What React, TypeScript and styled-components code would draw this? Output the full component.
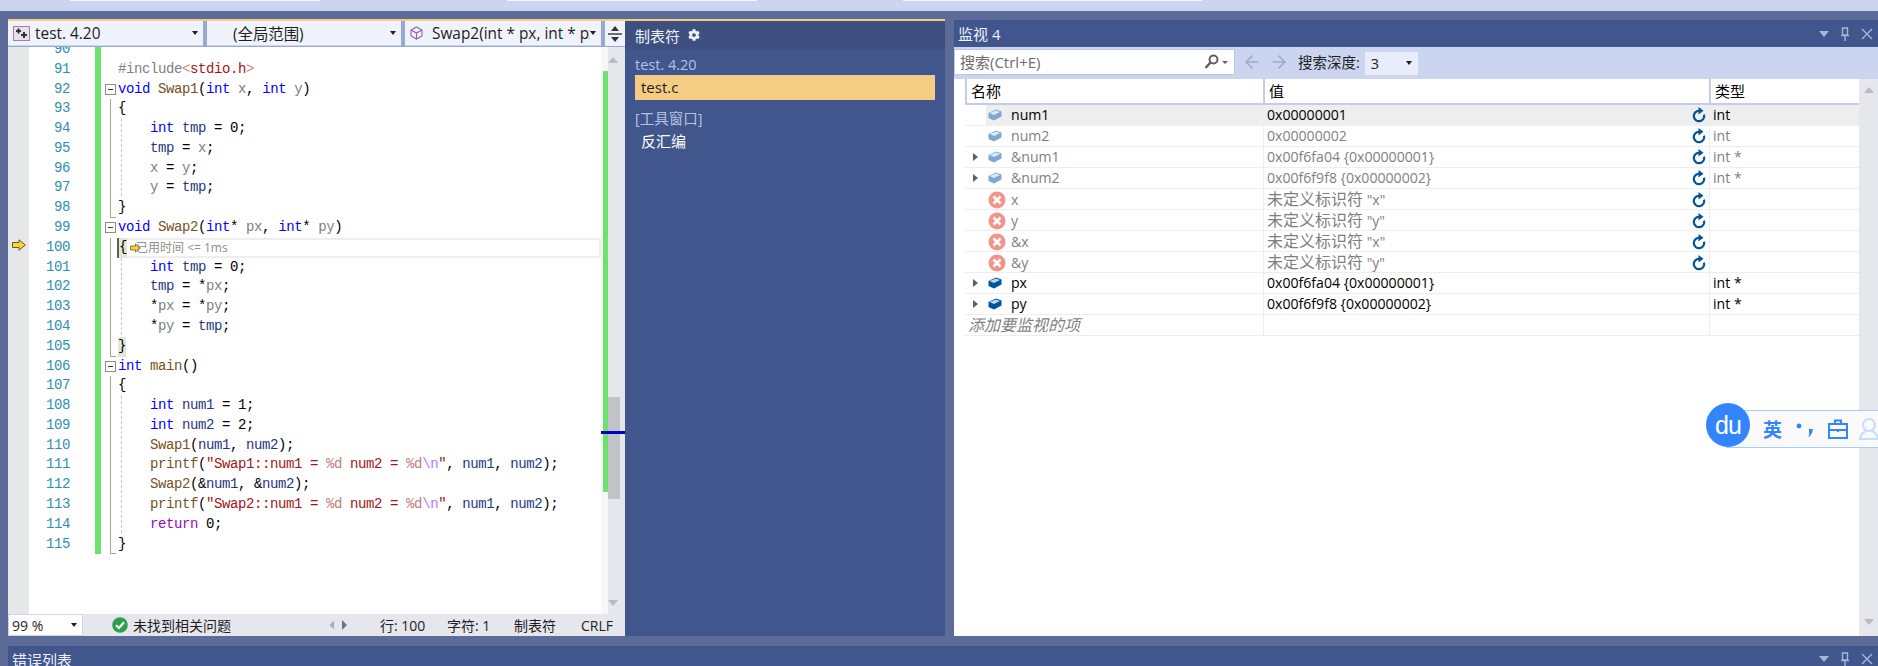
import React from 'react'
import styled, { createGlobalStyle } from 'styled-components'
import { FaCog } from 'react-icons/fa'
import { ArrowLeft, ArrowRight } from 'lucide-react'

const UI_FONT = `'Open Sans', 'Noto Sans CJK SC', sans-serif`
const CODE_FONT = `'Liberation Mono', 'Noto Sans CJK SC', monospace`

const GlobalStyle = createGlobalStyle`
  html, body {
    margin: 0;
    padding: 0;
    width: 1878px;
    height: 666px;
    overflow: hidden;
    background: #ccd5f0;
  }
`

const Page = styled.div`
  position: relative;
  display: flex;
  flex-direction: column;
  width: 1878px;
  height: 666px;
  overflow: hidden;
  background: #5d6b99;
  font-family: ${UI_FONT};
  font-size: 13px;
`

const TopBand = styled.div`
  display: flex;
  flex: none;
  height: 11px;
  margin-bottom: 8px;
  background: #ccd5f0;
`

const Slip = styled.div<{ $left: number; $width: number }>`
  height: 1px;
  width: ${(p) => p.$width}px;
  margin-left: ${(p) => p.$left}px;
  background: #f4f6fd;
`

const Workspace = styled.div`
  display: flex;
  flex: none;
  height: 617px;
  padding-left: 8px;
`

const EditorPane = styled.div`
  display: flex;
  flex-direction: column;
  flex: none;
  width: 617px;
  border-top: 2px solid #f5cc84;
`

const NavBar = styled.div`
  display: flex;
  flex: none;
  height: 26px;
  box-sizing: border-box;
  border-bottom: 1px solid #98a9d1;
  background: #98a9d1;
`

const Combo = styled.div<{ $width: number; $pad: number }>`
  display: flex;
  align-items: center;
  flex: none;
  width: ${(p) => p.$width}px;
  margin-right: 4px;
  padding-left: ${(p) => p.$pad}px;
  padding-right: 5px;
  box-sizing: border-box;
  overflow: hidden;
  border-bottom: 1px solid #ccd5f0;
  background: #f0f3fc;
  color: #1e1e1e;
  font-size: 15.4px;
  white-space: nowrap;

  svg {
    flex: none;
  }
`

const ComboText = styled.span`
  flex: 1;
  overflow: hidden;
`

const ComboIcon = styled.svg`
  margin-right: 5px;
`

const Caret = styled.i<{ $color?: string }>`
  flex: none;
  width: 0;
  height: 0;
  border-left: 3.5px solid transparent;
  border-right: 3.5px solid transparent;
  border-top: 4px solid ${(p) => p.$color || '#1e1e1e'};
`

const SplitButton = styled.div`
  display: flex;
  align-items: center;
  justify-content: center;
  flex: 1;
  background: #f0f3fc;
`

const EditorBody = styled.div`
  display: flex;
  flex: 1;
  min-height: 0;
  background: #fff;
`

const CodeArea = styled.div`
  position: relative;
  flex: 1;
  min-width: 0;
  overflow: hidden;
  padding-left: 21px;
  background: linear-gradient(#e6e7e8, #e6e7e8) 0 0 / 21px 100% no-repeat;
`

const Lines = styled.div`
  margin-top: -7px;
`

const Line = styled.div`
  display: flex;
  height: 19.79px;
  font-family: ${CODE_FONT};
  font-size: 14px;
  letter-spacing: -0.4px;
  line-height: 19.79px;
  white-space: pre;
`

const LineNo = styled.div`
  flex: none;
  width: 41px;
  text-align: right;
  color: #2b91af;
`

const Green = styled.div`
  flex: none;
  width: 6px;
  margin-left: 25px;
  background: #6ee26c;
`

const Fold = styled.div<{ $kind?: 'open' | 'mid' | 'end' }>`
  display: flex;
  align-items: center;
  flex: none;
  width: 17px;
  padding-left: 4px;
  box-sizing: border-box;
  background:
    ${(p) =>
      p.$kind === 'mid'
        ? 'linear-gradient(#a2a2a2, #a2a2a2) 9px 0 / 1px 100% no-repeat'
        : p.$kind === 'end'
          ? 'linear-gradient(#a2a2a2, #a2a2a2) 9px 0 / 1px 100% no-repeat, linear-gradient(#a2a2a2, #a2a2a2) 9px 100% / 6px 1px no-repeat'
          : 'none'};
`

const FoldBox = styled.div`
  display: flex;
  align-items: center;
  justify-content: center;
  width: 9px;
  height: 9px;
  border: 1px solid #8c8c8c;
  background: #fff;

  &::after {
    content: '';
    width: 5px;
    height: 1px;
    background: #333;
  }
`

const Code = styled.div<{ $guide?: boolean; $current?: boolean }>`
  display: flex;
  align-items: center;
  flex: 1;
  min-width: 0;
  color: #000;
  ${(p) =>
    p.$guide &&
    `background: repeating-linear-gradient(#c8c8c8 0 3px, transparent 3px 5px) 3px 0 / 1px 100% no-repeat;`}
  ${(p) =>
    p.$current &&
    `box-shadow: inset 0 0 0 2px #eeeef2; border-left: 2px solid #5f5f5f; margin-left: -1px;`}
`

const TOKEN_COLORS: Record<string, string> = {
  t: '#000000',
  k: '#0000ff',
  f: '#74531f',
  p: '#808080',
  v: '#1f377f',
  s: '#a31515',
  e: '#c57b7b',
  n: '#b776fb',
  r: '#8f08c4',
  m: '#808080',
  a: '#e08080',
}

const Token = styled.span<{ $type: string }>`
  color: ${(p) => TOKEN_COLORS[p.$type]};
`

const Brace = styled.span`
  background: #e2e6d6;
`

const Hint = styled.span`
  display: flex;
  align-items: center;
  margin-left: 3px;
  color: #8e8e8e;
  font-family: ${UI_FONT};
  font-size: 12px;
  letter-spacing: 0;
`

const HintArrow = styled.svg`
  flex: none;
  margin-right: -5px;
`

const MarginArrow = styled.svg`
  position: absolute;
  left: 4px;
  top: 192px;
`

const EditorScroll = styled.div`
  position: relative;
  flex: none;
  width: 24px;
  background: linear-gradient(#e6e7ed, #e6e7ed) 7px 0 / 17px 100% no-repeat #f7f7f9;
`

const ScrollArrow = styled.i<{ $down?: boolean; $top: number; $left: number }>`
  position: absolute;
  left: ${(p) => p.$left}px;
  top: ${(p) => p.$top}px;
  width: 0;
  height: 0;
  border-left: 5px solid transparent;
  border-right: 5px solid transparent;
  ${(p) =>
    p.$down ? 'border-top: 6px solid #b8bac4;' : 'border-bottom: 6px solid #b8bac4;'}
`

const ScrollMark = styled.div<{ $top: number; $left: number; $w: number; $h: number; $c: string }>`
  position: absolute;
  top: ${(p) => p.$top}px;
  left: ${(p) => p.$left}px;
  width: ${(p) => p.$w}px;
  height: ${(p) => p.$h}px;
  background: ${(p) => p.$c};
`

const StatusBar = styled.div`
  display: flex;
  align-items: center;
  flex: none;
  height: 22px;
  background: #e6e7ed;
  color: #1e1e1e;
  font-size: 14px;
`

const ZoomBox = styled.div`
  display: flex;
  align-items: center;
  justify-content: space-between;
  flex: none;
  width: 75px;
  height: 22px;
  margin-right: 29px;
  padding: 0 5px 0 3px;
  box-sizing: border-box;
  border: 1px solid #ccd5f0;
  background: #fff;
`

const StatusItem = styled.div<{ $w: number }>`
  display: flex;
  align-items: center;
  flex: none;
  gap: 5px;
  width: ${(p) => p.$w}px;
  white-space: nowrap;
`

const TabsPane = styled.div`
  display: flex;
  flex-direction: column;
  flex: none;
  width: 320px;
  margin-right: 9px;
  border-top: 2px solid #f5cc84;
  background: #40568d;
  color: #fff;
`

const TabsHeader = styled.div`
  display: flex;
  align-items: center;
  flex: none;
  gap: 8px;
  height: 28px;
  padding-left: 10px;
  background: #3e5080;
  font-size: 15px;
  color: #eef1fa;
`

const GroupLabel = styled.div<{ $top: number }>`
  margin: ${(p) => p.$top}px 0 0 10px;
  height: 18px;
  line-height: 18px;
  color: #b6c2e2;
  font-size: 14.5px;
`

const FileItem = styled.div<{ $active?: boolean }>`
  height: 25px;
  margin: 1px 10px 0 10px;
  padding-left: 6px;
  line-height: 25px;
  font-size: 15px;
  color: ${(p) => (p.$active ? '#1e1e1e' : '#fff')};
  background: ${(p) => (p.$active ? '#f5cc84' : 'transparent')};
`

const WatchPane = styled.div`
  display: flex;
  flex-direction: column;
  flex: 1;
  min-width: 0;
  margin-top: 1px;
  background: #fff;
`

const TitleBar = styled.div<{ $height: number }>`
  display: flex;
  align-items: center;
  justify-content: space-between;
  flex: none;
  height: ${(p) => p.$height}px;
  padding-left: 4px;
  background: #40568d;
  color: #eef1fa;
  font-size: 15px;
`

const TitleButtons = styled.div`
  display: flex;
  align-items: center;
  gap: 11px;
  padding-right: 5px;
  color: #a9b6d8;
`

const ToolBar = styled.div`
  display: flex;
  align-items: center;
  flex: none;
  height: 32px;
  padding-bottom: 3px;
  box-sizing: border-box;
  background: #ccd5f0;
  color: #1e1e1e;
`

const SearchBox = styled.div`
  display: flex;
  align-items: center;
  flex: none;
  width: 281px;
  height: 26px;
  margin-right: 7px;
  padding: 0 6px 0 5px;
  box-sizing: border-box;
  border: 1px solid #bcc7e6;
  background: #fff;
  color: #6d6d6d;
  font-size: 15px;
`

const SearchText = styled.span`
  flex: 1;
`

const DepthLabel = styled.span`
  margin: 0 5px 0 9px;
  font-size: 14.5px;
`

const DepthCombo = styled.div`
  display: flex;
  align-items: center;
  justify-content: space-between;
  width: 53px;
  height: 23px;
  margin-top: 3px;
  padding: 0 6px 0 6px;
  box-sizing: border-box;
  background: #e9edf9;
  font-size: 14.5px;
`

const WatchBody = styled.div`
  display: flex;
  flex: 1;
  min-height: 0;
`

const Table = styled.div`
  flex: 1;
  min-width: 0;
  padding-left: 11px;
`

const HeadRow = styled.div`
  display: grid;
  grid-template-columns: 298px 446px 1fr;
  height: 24px;
  border-bottom: 2px solid #c3cde9;
  box-sizing: content-box;
  line-height: 24px;
  color: #000;
  font-size: 15px;
`

const HeadCell = styled.div`
  padding-left: 4px;
  border-left: 2px solid #c3cde9;
`

const Row = styled.div`
  display: grid;
  grid-template-columns: 21px 277px 446px 1fr;
  height: 20px;
  border-bottom: 1px solid #eeeef2;
`

const Expander = styled.div`
  display: flex;
  align-items: center;
  padding-left: 8px;
`

const ExpandArrow = styled.i`
  width: 0;
  height: 0;
  border-top: 4px solid transparent;
  border-bottom: 4px solid transparent;
  border-left: 5px solid #5f5f5f;
`

const Cell = styled.div<{ $dim?: boolean; $selected?: boolean; $line?: boolean }>`
  display: flex;
  align-items: center;
  min-width: 0;
  padding-left: ${(p) => (p.$line ? 3 : 2)}px;
  padding-right: 3px;
  ${(p) => p.$line && 'border-left: 1px solid #eeeef2;'}
  background: ${(p) => (p.$selected ? '#eeeeee' : 'transparent')};
  color: ${(p) => (p.$dim ? '#7f7f7f' : '#000')};
  font-size: 14.1px;
  line-height: 20px;
  white-space: nowrap;
`

const CellText = styled.span`
  flex: 1;
`

const Cjk = styled.span`
  font-size: 16px;
`

const NameIcon = styled.span`
  display: flex;
  align-items: center;
  flex: none;
  width: 23px;
`

const AddRow = styled.div`
  display: grid;
  grid-template-columns: 298px 446px 1fr;
  height: 20px;
  border-bottom: 1px solid #eeeef2;
  color: #7f7f7f;
  font-size: 16px;
  font-style: italic;
  line-height: 20px;
`

const AddCell = styled.div`
  padding-left: 3px;
`

const AddEmpty = styled.div`
  border-left: 1px solid #eeeef2;
`

const WatchScroll = styled.div`
  position: relative;
  flex: none;
  width: 19px;
  background: #e6e7ed;
`

const BottomPane = styled.div`
  margin: 10px 0 0 8px;
`

const ImeBar = styled.div`
  position: absolute;
  left: 1726px;
  top: 410px;
  display: flex;
  align-items: center;
  width: 160px;
  height: 38px;
  padding-left: 36px;
  box-sizing: border-box;
  border: 1px solid #a9cbff;
  background: #fafafa;
  color: #3385ff;
`

const ImeLogo = styled.div`
  position: absolute;
  left: 1706px;
  top: 403px;
  display: flex;
  align-items: center;
  justify-content: center;
  width: 44px;
  height: 44px;
  border-radius: 50%;
  background: #3385ff;
  color: #fff;
  font-family: 'Liberation Sans', sans-serif;
  font-size: 25px;
  letter-spacing: -1px;
`

const ImeWord = styled.span`
  flex: none;
  width: 33px;
  font-size: 19px;
  font-weight: 700;
`

const ImePunct = styled.svg`
  flex: none;
  margin-right: 14px;
`

const ImeIcon = styled.svg`
  flex: none;
  margin-right: 11px;
`

type Tok = [string, string]
interface LineData {
  n: number
  fold?: 'open' | 'mid' | 'end'
  guide?: boolean
  code: Tok[]
}

const printfLine = (name: string): Tok[] => [
  ['t', '    '],
  ['f', 'printf'],
  ['t', '('],
  ['s', `"${name}::num1 = `],
  ['e', '%d'],
  ['s', ' num2 = '],
  ['e', '%d'],
  ['n', '\\n'],
  ['s', '"'],
  ['t', ', '],
  ['v', 'num1'],
  ['t', ', '],
  ['v', 'num2'],
  ['t', ');'],
]

const LINES: LineData[] = [
  { n: 90, code: [] },
  { n: 91, code: [['m', '#include'], ['a', '<'], ['s', 'stdio.h'], ['a', '>']] },
  {
    n: 92,
    fold: 'open',
    code: [['k', 'void'], ['t', ' '], ['f', 'Swap1'], ['t', '('], ['k', 'int'], ['t', ' '], ['p', 'x'], ['t', ', '], ['k', 'int'], ['t', ' '], ['p', 'y'], ['t', ')']],
  },
  { n: 93, fold: 'mid', code: [['t', '{']] },
  { n: 94, fold: 'mid', guide: true, code: [['t', '    '], ['k', 'int'], ['t', ' '], ['v', 'tmp'], ['t', ' = 0;']] },
  { n: 95, fold: 'mid', guide: true, code: [['t', '    '], ['v', 'tmp'], ['t', ' = '], ['p', 'x'], ['t', ';']] },
  { n: 96, fold: 'mid', guide: true, code: [['t', '    '], ['p', 'x'], ['t', ' = '], ['p', 'y'], ['t', ';']] },
  { n: 97, fold: 'mid', guide: true, code: [['t', '    '], ['p', 'y'], ['t', ' = '], ['v', 'tmp'], ['t', ';']] },
  { n: 98, fold: 'end', code: [['t', '}']] },
  {
    n: 99,
    fold: 'open',
    code: [['k', 'void'], ['t', ' '], ['f', 'Swap2'], ['t', '('], ['k', 'int'], ['t', '* '], ['p', 'px'], ['t', ', '], ['k', 'int'], ['t', '* '], ['p', 'py'], ['t', ')']],
  },
  { n: 100, fold: 'mid', code: [] },
  { n: 101, fold: 'mid', guide: true, code: [['t', '    '], ['k', 'int'], ['t', ' '], ['v', 'tmp'], ['t', ' = 0;']] },
  { n: 102, fold: 'mid', guide: true, code: [['t', '    '], ['v', 'tmp'], ['t', ' = *'], ['p', 'px'], ['t', ';']] },
  { n: 103, fold: 'mid', guide: true, code: [['t', '    *'], ['p', 'px'], ['t', ' = *'], ['p', 'py'], ['t', ';']] },
  { n: 104, fold: 'mid', guide: true, code: [['t', '    *'], ['p', 'py'], ['t', ' = '], ['v', 'tmp'], ['t', ';']] },
  { n: 105, fold: 'end', code: [] },
  { n: 106, fold: 'open', code: [['k', 'int'], ['t', ' '], ['f', 'main'], ['t', '()']] },
  { n: 107, fold: 'mid', code: [['t', '{']] },
  { n: 108, fold: 'mid', guide: true, code: [['t', '    '], ['k', 'int'], ['t', ' '], ['v', 'num1'], ['t', ' = 1;']] },
  { n: 109, fold: 'mid', guide: true, code: [['t', '    '], ['k', 'int'], ['t', ' '], ['v', 'num2'], ['t', ' = 2;']] },
  { n: 110, fold: 'mid', guide: true, code: [['t', '    '], ['f', 'Swap1'], ['t', '('], ['v', 'num1'], ['t', ', '], ['v', 'num2'], ['t', ');']] },
  { n: 111, fold: 'mid', guide: true, code: printfLine('Swap1') },
  { n: 112, fold: 'mid', guide: true, code: [['t', '    '], ['f', 'Swap2'], ['t', '(&'], ['v', 'num1'], ['t', ', &'], ['v', 'num2'], ['t', ');']] },
  { n: 113, fold: 'mid', guide: true, code: printfLine('Swap2') },
  { n: 114, fold: 'mid', guide: true, code: [['t', '    '], ['r', 'return'], ['t', ' 0;']] },
  { n: 115, fold: 'end', code: [['t', '}']] },
]

interface WatchData {
  name: string
  value: React.ReactNode
  type: string
  icon: 'light' | 'dark' | 'error'
  expand?: boolean
  refresh?: boolean
  dim?: boolean
  selected?: boolean
}

const undefinedId = (name: string) => (
  <>
    <Cjk>未定义标识符</Cjk> "{name}"
  </>
)

const WATCHES: WatchData[] = [
  { name: 'num1', value: '0x00000001', type: 'int', icon: 'light', refresh: true, selected: true },
  { name: 'num2', value: '0x00000002', type: 'int', icon: 'light', refresh: true, dim: true },
  { name: '&num1', value: '0x00f6fa04 {0x00000001}', type: 'int *', icon: 'light', expand: true, refresh: true, dim: true },
  { name: '&num2', value: '0x00f6f9f8 {0x00000002}', type: 'int *', icon: 'light', expand: true, refresh: true, dim: true },
  { name: 'x', value: undefinedId('x'), type: '', icon: 'error', refresh: true, dim: true },
  { name: 'y', value: undefinedId('y'), type: '', icon: 'error', refresh: true, dim: true },
  { name: '&x', value: undefinedId('x'), type: '', icon: 'error', refresh: true, dim: true },
  { name: '&y', value: undefinedId('y'), type: '', icon: 'error', refresh: true, dim: true },
  { name: 'px', value: '0x00f6fa04 {0x00000001}', type: 'int *', icon: 'dark', expand: true },
  { name: 'py', value: '0x00f6f9f8 {0x00000002}', type: 'int *', icon: 'dark', expand: true },
]

const Cube = ({ color }: { color: string }) => (
  <svg width="14" height="12" viewBox="0 0 14 12">
    <path d="M0.5 4 L8 0.5 L13.5 2.5 L13.5 7.5 L6 11.5 L0.5 9 Z" fill={color} />
    <path d="M1.5 4 L8 1.5 L12 3 L6 6 Z" fill="#fff" opacity="0.75" />
  </svg>
)

const ErrorIcon = () => (
  <svg width="18" height="18" viewBox="0 0 18 18">
    <circle cx="9" cy="9" r="8.5" fill="#f1948a" />
    <path d="M5.5 5.5 L12.5 12.5 M12.5 5.5 L5.5 12.5" stroke="#fff" strokeWidth="2.6" />
  </svg>
)

const Refresh = () => (
  <svg width="14" height="16" viewBox="0 0 14 16">
    <path d="M12 7.6 A5.2 5.2 0 1 1 7 3.8" fill="none" stroke="#00539c" strokeWidth="2.2" />
    <path d="M6.5 0 L11.5 3.8 L6.5 7.5 Z" fill="#00539c" />
  </svg>
)

const TitleIcons = () => (
  <TitleButtons>
    <svg width="10" height="6" viewBox="0 0 10 6">
      <path d="M0 0 H10 L5 6 Z" fill="currentColor" />
    </svg>
    <svg width="10" height="14" viewBox="0 0 10 14">
      <path d="M2.5 1 H7.5 V8 H2.5 Z M1 8.5 H9 M5 8.5 V14" fill="none" stroke="currentColor" strokeWidth="1.4" />
    </svg>
    <svg width="12" height="12" viewBox="0 0 12 12">
      <path d="M1 1 L11 11 M11 1 L1 11" stroke="currentColor" strokeWidth="1.4" />
    </svg>
  </TitleButtons>
)

const CodeLine = ({ line }: { line: LineData }) => (
  <Line>
    <LineNo>{line.n}</LineNo>
    <Green />
    <Fold $kind={line.fold}>{line.fold === 'open' && <FoldBox />}</Fold>
    {line.n === 100 ? (
      <Code $current>
        <Brace>{'{'}</Brace>
        <Hint>
          <HintArrow width="11" height="10" viewBox="0 0 14 12">
            <path d="M0.5 3.5 H7 V0.8 L13.3 6 L7 11.2 V8.5 H0.5 Z" fill="#f7d23e" stroke="#6f5c12" strokeWidth="1" />
          </HintArrow>
          已用时间 &lt;= 1ms
        </Hint>
      </Code>
    ) : (
      <Code $guide={line.guide}>
        {line.n === 105 ? (
          <Brace>{'}'}</Brace>
        ) : (
          line.code.map(([type, text], i) => (
            <Token key={i} $type={type}>
              {text}
            </Token>
          ))
        )}
      </Code>
    )}
  </Line>
)

const WatchRow = ({ item }: { item: WatchData }) => (
  <Row>
    <Expander>{item.expand && <ExpandArrow />}</Expander>
    <Cell $dim={item.dim} $selected={item.selected}>
      <NameIcon>
        {item.icon === 'error' ? <ErrorIcon /> : <Cube color={item.icon === 'dark' ? '#00539c' : '#7ea8d4'} />}
      </NameIcon>
      <CellText>{item.name}</CellText>
    </Cell>
    <Cell $line $dim={item.dim} $selected={item.selected}>
      <CellText>{item.value}</CellText>
      {item.refresh && <Refresh />}
    </Cell>
    <Cell $line $dim={item.dim} $selected={item.selected}>
      <CellText>{item.type}</CellText>
    </Cell>
  </Row>
)

const App = () => (
  <Page>
    <GlobalStyle />
    <TopBand>
      <Slip $left={70} $width={250} />
      <Slip $left={187} $width={250} />
      <Slip $left={146} $width={299} />
    </TopBand>

    <Workspace>
      <EditorPane>
        <NavBar>
          <Combo $width={195} $pad={5}>
            <ComboIcon width="17" height="15" viewBox="0 0 17 15">
              <rect x="0.5" y="0.5" width="16" height="14" fill="#e4e4e8" stroke="#b274b4" />
              <path d="M3 5 H8 M5.5 2.5 V7.5 M8 9 H14 M11 6 V12" stroke="#333" strokeWidth="2" />
            </ComboIcon>
            <ComboText>test. 4.20</ComboText>
            <Caret />
          </Combo>
          <Combo $width={194} $pad={26}>
            <ComboText>(全局范围)</ComboText>
            <Caret />
          </Combo>
          <Combo $width={196} $pad={5}>
            <ComboIcon width="13" height="14" viewBox="0 0 13 14">
              <path d="M6.5 1 L12 4 V10 L6.5 13 L1 10 V4 Z M1 4 L6.5 7 L12 4 M6.5 7 V13" fill="none" stroke="#8f5fb0" strokeWidth="1.1" />
            </ComboIcon>
            <ComboText>&nbsp;Swap2(int * px, int * px</ComboText>
            <Caret />
          </Combo>
          <SplitButton>
            <svg width="14" height="18" viewBox="0 0 14 18">
              <path d="M7 1 L11 6 H3 Z M7 17 L11 12 H3 Z" fill="#333" />
              <path d="M0 9 H14" stroke="#333" strokeWidth="1.4" />
            </svg>
          </SplitButton>
        </NavBar>

        <EditorBody>
          <CodeArea>
            <MarginArrow width="14" height="12" viewBox="0 0 14 12">
              <path d="M0.5 3.5 H7 V0.8 L13.3 6 L7 11.2 V8.5 H0.5 Z" fill="#f7d23e" stroke="#6f5c12" strokeWidth="1" />
            </MarginArrow>
            <Lines>
              {LINES.map((line) => (
                <CodeLine key={line.n} line={line} />
              ))}
            </Lines>
          </CodeArea>
          <EditorScroll>
            <ScrollArrow $left={7} $top={10} />
            <ScrollMark $left={2} $top={24} $w={5} $h={421} $c="#6ee26c" />
            <ScrollMark $left={7} $top={350} $w={12} $h={102} $c="#c2c3c9" />
            <ScrollMark $left={0} $top={384} $w={24} $h={3} $c="#0000cc" />
            <ScrollArrow $left={7} $down $top={553} />
          </EditorScroll>
        </EditorBody>

        <StatusBar>
          <ZoomBox>
            99 %
            <Caret />
          </ZoomBox>
          <StatusItem $w={217}>
            <svg width="16" height="16" viewBox="0 0 16 16">
              <circle cx="8" cy="8" r="7.8" fill="#2e9e4f" />
              <path d="M4 8.2 L7 11 L12 5.2" fill="none" stroke="#fff" strokeWidth="2.2" />
            </svg>
            未找到相关问题
          </StatusItem>
          <StatusItem $w={51}>
            <svg width="18" height="12" viewBox="0 0 18 12">
              <path d="M5 1.5 V10.5 L0.5 6 Z" fill="#a9abb8" />
              <path d="M13 1 V11 L18 6 Z" fill="#6f7280" />
            </svg>
          </StatusItem>
          <StatusItem $w={67}>行: 100</StatusItem>
          <StatusItem $w={67}>字符: 1</StatusItem>
          <StatusItem $w={67}>制表符</StatusItem>
          <StatusItem $w={40}>CRLF</StatusItem>
        </StatusBar>
      </EditorPane>

      <TabsPane>
        <TabsHeader>
          制表符
          <FaCog size={12} />
        </TabsHeader>
        <GroupLabel $top={7}>test. 4.20</GroupLabel>
        <FileItem $active>test.c</FileItem>
        <GroupLabel $top={10}>[工具窗口]</GroupLabel>
        <FileItem>反汇编</FileItem>
      </TabsPane>

      <WatchPane>
        <TitleBar $height={27}>
          监视 4
          <TitleIcons />
        </TitleBar>
        <ToolBar>
          <SearchBox>
            <SearchText>搜索(Ctrl+E)</SearchText>
            <svg width="24" height="16" viewBox="0 0 24 16">
              <circle cx="9.5" cy="5.5" r="4" fill="none" stroke="#5f5f5f" strokeWidth="2" />
              <path d="M6.5 8.5 L1.5 14" stroke="#5f5f5f" strokeWidth="2.6" />
              <path d="M18 7 H24 L21 10 Z" fill="#5f5f5f" />
            </svg>
          </SearchBox>
          <ArrowLeft size={20} color="#a3aac2" strokeWidth={2} />
          <ArrowRight size={20} color="#a3aac2" strokeWidth={2} style={{ marginLeft: 7 }} />
          <DepthLabel>搜索深度:</DepthLabel>
          <DepthCombo>
            3
            <Caret />
          </DepthCombo>
        </ToolBar>
        <WatchBody>
          <Table>
            <HeadRow>
              <HeadCell>名称</HeadCell>
              <HeadCell>值</HeadCell>
              <HeadCell>类型</HeadCell>
            </HeadRow>
            {WATCHES.map((item) => (
              <WatchRow key={item.name} item={item} />
            ))}
            <AddRow>
              <AddCell>添加要监视的项</AddCell>
              <AddEmpty />
              <AddEmpty />
            </AddRow>
          </Table>
          <WatchScroll>
            <ScrollArrow $left={5} $top={8} />
            <ScrollArrow $left={5} $down $top={540} />
          </WatchScroll>
        </WatchBody>
      </WatchPane>
    </Workspace>

    <BottomPane>
      <TitleBar $height={26}>
        错误列表
        <TitleIcons />
      </TitleBar>
    </BottomPane>

    <ImeBar>
      <ImeWord>英</ImeWord>
      <ImePunct width="18" height="20" viewBox="0 0 18 20">
        <circle cx="3" cy="7" r="2.4" fill="#3385ff" />
        <path d="M13 10 h4 l-1 4 q-1 3 -4 4 q2 -3 1 -4 z" fill="#3385ff" />
      </ImePunct>
      <ImeIcon width="20" height="20" viewBox="0 0 20 20">
        <path d="M1 5 H19 V19 H1 Z M7 5 V1.5 H13 V5 M1 11 H19 M10 10 V13" fill="none" stroke="#3385ff" strokeWidth="2" />
      </ImeIcon>
      <ImeIcon width="20" height="22" viewBox="0 0 20 22">
        <circle cx="10" cy="7" r="6" fill="none" stroke="#c5dcff" strokeWidth="2" />
        <path d="M7 13 Q2 15 1 21 H19 Q18 15 13 13" fill="none" stroke="#c5dcff" strokeWidth="2" />
      </ImeIcon>
    </ImeBar>
    <ImeLogo>du</ImeLogo>
  </Page>
)

export default App
